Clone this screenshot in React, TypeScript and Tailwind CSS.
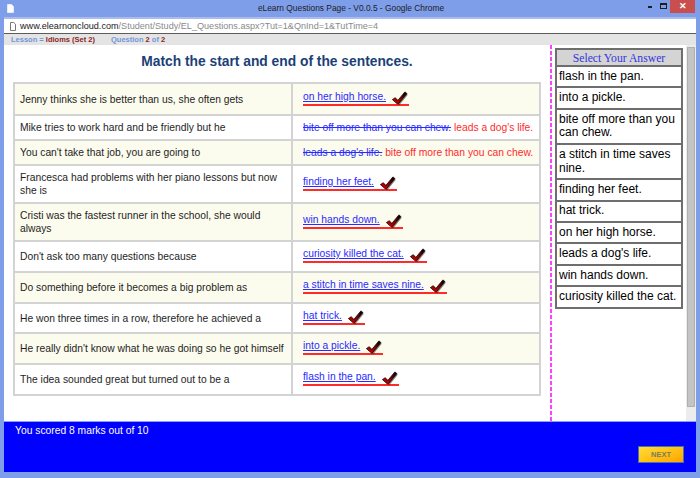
import React from "react";

type Row = { q: string; a: string; wrong?: string; h: number };

const rows: Row[] = [
  { q: "Jenny thinks she is better than us, she often gets", a: "on her high horse.", h: 32 },
  { q: "Mike tries to work hard and be friendly but he", wrong: "bite off more than you can chew.", a: "leads a dog's life.", h: 25 },
  { q: "You can't take that job, you are going to", wrong: "leads a dog's life.", a: "bite off more than you can chew.", h: 25 },
  { q: "Francesca had problems with her piano lessons but now she is", a: "finding her feet.", h: 38 },
  { q: "Cristi was the fastest runner in the school, she would always", a: "win hands down.", h: 38 },
  { q: "Don't ask too many questions because", a: "curiosity killed the cat.", h: 31 },
  { q: "Do something before it becomes a big problem as", a: "a stitch in time saves nine.", h: 31 },
  { q: "He won three times in a row, therefore he achieved a", a: "hat trick.", h: 30 },
  { q: "He really didn't know what he was doing so he got himself", a: "into a pickle.", h: 31 },
  { q: "The idea sounded great but turned out to be a", a: "flash in the pan.", h: 31 },
];

const answers = [
  "flash in the pan.",
  "into a pickle.",
  "bite off more than you can chew.",
  "a stitch in time saves nine.",
  "finding her feet.",
  "hat trick.",
  "on her high horse.",
  "leads a dog's life.",
  "win hands down.",
  "curiosity killed the cat.",
];

function Check() {
  return (
    <svg width="17" height="14" viewBox="0 0 17 14" className="shrink-0 block">
      <path d="M3.2 9.6 L5.8 7.9 L8.2 10.6 L15.3 2.4 L16.8 3.8 L8.6 13.8 L7.6 13.8 Z" fill="#000" opacity="0.5" />
      <path
        d="M1.4 8.6 L4.3 6.7 L6.8 9.5 L13.9 0.9 L15.9 2.5 L7.4 12.8 L6.2 12.8 Z"
        fill="url(#chkgrad)"
        stroke="#140000"
        strokeWidth="0.8"
        strokeLinejoin="round"
      />
    </svg>
  );
}

export default function App() {
  return (
    <div
      className="w-[700px] h-[478px] bg-[#7e9eea] flex flex-col pb-[6px] overflow-hidden relative"
      style={{ fontFamily: '"Liberation Sans", Arial, sans-serif' }}
    >
      <svg width="0" height="0" className="absolute">
        <defs>
          <linearGradient id="chkgrad" x1="0" y1="1" x2="1" y2="0">
            <stop offset="0%" stopColor="#d40000" />
            <stop offset="45%" stopColor="#9a0000" />
            <stop offset="80%" stopColor="#200000" />
            <stop offset="100%" stopColor="#000" />
          </linearGradient>
        </defs>
      </svg>

      {/* Title bar */}
      <div className="h-[17px] shrink-0 flex items-start">
        <svg width="7" height="9" viewBox="0 0 7 9" className="ml-[7px] mt-[4px] shrink-0">
          <path d="M0.5 0.5 H4.5 L6.5 2.5 V8.5 H0.5 Z" fill="#fff" stroke="#e4ebfc" strokeWidth="1" />
        </svg>
        <span className="flex-1 text-center pl-[40px] text-[8.4px] text-[#1d1d1d] leading-[17px]">
          eLearn Questions Page - V0.0.5 - Google Chrome
        </span>
        <div className="w-[4px] h-[2px] bg-[#1e1e1e] mt-[6px] shrink-0" />
        <div className="w-[7px] h-[6px] border border-[#1e1e1e] border-t-2 mt-[3px] ml-[8px] shrink-0" />
        <div className="w-[25px] h-[13px] shrink-0 bg-[#c94f4f] text-white text-[9px] leading-[13px] text-center font-bold ml-[3px] mr-[5px]">
          ✕
        </div>
      </div>

      <div className="flex-1 flex flex-col px-[4px]">
        {/* Address bar */}
        <div className="h-[16px] shrink-0 bg-white border-t-2 border-[#a9bcec] flex items-center pl-[6px]">
          <svg width="6" height="9" viewBox="0 0 6 9" className="mr-[4px]">
            <path d="M0.5 0.5 H3.8 L5.5 2.2 V8.5 H0.5 Z" fill="#fff" stroke="#777" strokeWidth="1" />
          </svg>
          <span className="text-[9.1px] leading-[14px] text-[#8a8a8a]">
            <span className="text-[#222]">www.elearnoncloud.com</span>/Student/Study/EL_Questions.aspx?Tut=1&amp;QnInd=1&amp;TutTime=4
          </span>
        </div>
        <div className="h-[1px] shrink-0 bg-[#5c5c5c]" />

        {/* Lesson bar */}
        <div className="h-[11px] shrink-0 bg-[#e4e4e4] flex items-center pl-[7px] text-[7.5px] font-bold leading-[11px]">
          <span className="text-[#7394dc]">
            Lesson = <span className="text-[#8b2424]">Idioms (Set 2)</span>
          </span>
          <span className="ml-[16px] text-[#7394dc]">
            Question <span className="text-[#8b2424]">2</span> of <span className="text-[#8b2424]">2</span>
          </span>
        </div>

        {/* Content */}
        <div className="h-[376px] shrink-0 bg-white flex">
          {/* Left area */}
          <div className="w-[546px] shrink-0 flex flex-col">
            <h1 className="mt-[9px] text-center text-[13.8px] leading-[16px] font-bold text-[#1c3f78]">
              Match the start and end of the sentences.
            </h1>
            <div className="mt-[12px] ml-[9px] w-[528px] border-2 border-[#d3d3d3]">
              {rows.map((r, i) => (
                <div
                  key={i}
                  className={`flex border-b-2 border-[#d3d3d3] last:border-b-0 ${i % 2 === 0 ? "bg-[#fcfcee]" : "bg-white"}`}
                  style={{ height: i === rows.length - 1 ? r.h - 2 : r.h }}
                >
                  <div className="w-[278px] shrink-0 border-r-2 border-[#d3d3d3] flex items-center pl-[5px] pr-[2px] text-[10.3px] leading-[13px] text-[#1e1e1e]">
                    {r.q}
                  </div>
                  <div className="flex-1 flex items-center pl-[10px] text-[10.3px] leading-[12px]">
                    {r.wrong ? (
                      <span className="whitespace-nowrap">
                        <span className="text-[#2a2aff] line-through">{r.wrong}</span>{" "}
                        <span className="text-[#ff2b2b]">{r.a}</span>
                      </span>
                    ) : (
                      <span className="inline-flex items-end border-b-2 border-[#ff2a2a] pr-[1px] mt-[-2px]">
                        <span className="text-[#2a2aff] pb-[1px] whitespace-nowrap underline decoration-[#2a2aff] underline-offset-1">
                          {r.a}
                        </span>
                        <span className="ml-[5px] mb-[-1px]">
                          <Check />
                        </span>
                      </span>
                    )}
                  </div>
                </div>
              ))}
            </div>
          </div>

          {/* Dashed divider */}
          <div className="w-[2px] shrink-0 bg-[repeating-linear-gradient(to_bottom,#ff40ff_0px,#ff40ff_4px,transparent_4px,transparent_6px)]" />

          {/* Answer panel */}
          <div className="w-[134px] shrink-0 pt-[3px] pl-[3px] pr-[3px]">
            <div className="w-[128px] border-2 border-[#6e6e6e]">
              <div
                className="h-[17px] bg-[#d4d4d4] border-b-2 border-[#6e6e6e] text-center text-[11.7px] leading-[17px] text-[#3434e0]"
                style={{ fontFamily: '"Liberation Serif", "Times New Roman", serif' }}
              >
                Select Your Answer
              </div>
              {answers.map((a, i) => (
                <div
                  key={i}
                  className="border-b-2 border-[#6e6e6e] last:border-b-0 bg-white pl-[2px] pr-[2px] text-[12px] leading-[13.8px] text-black"
                  style={{ paddingTop: 2.8, paddingBottom: 2.8 }}
                >
                  {a}
                </div>
              ))}
            </div>
          </div>

          {/* Scrollbar */}
          <div className="w-[10px] shrink-0 bg-[#ececec] pt-[2px] pb-[14px] px-[1px] flex">
            <div className="flex-1 bg-[#c4c4c4] border border-[#b0b0b0]" />
          </div>
        </div>

        {/* Bottom bar */}
        <div className="flex-1 bg-[#0000ff] border-t border-[#8c9cff] flex flex-col pl-[11px] pr-[12px]">
          <div className="mt-[3px] text-white text-[10.3px] leading-[12px]">You scored 8 marks out of 10</div>
          <button
            className="self-end mt-[9px] w-[46px] h-[17px] border border-[#4b6fb0] bg-[linear-gradient(160deg,#ffdc3a_0%,#ffc51a_45%,#ffa400_100%)] text-[7.5px] font-bold text-[#7b7b63] leading-none flex items-center justify-center"
          >
            NEXT
          </button>
        </div>
      </div>
    </div>
  );
}
